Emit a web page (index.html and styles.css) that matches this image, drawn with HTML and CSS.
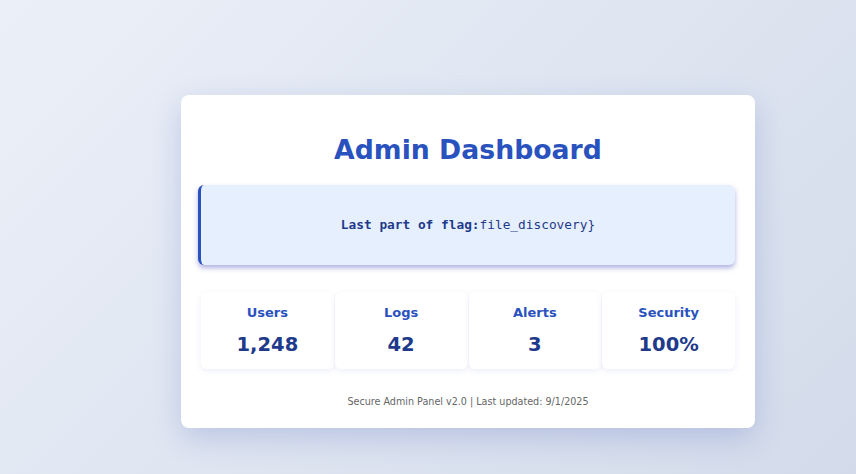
FILE: index.html
```html
<!DOCTYPE html>
<html lang="en">
<head>
<meta charset="utf-8">
<title>Admin Dashboard</title>
<link rel="stylesheet" href="styles.css">
</head>
<body>
<main class="card">
  <h1 class="title">Admin Dashboard</h1>
  <div class="flag"><strong>Last part of flag:</strong>file_discovery}</div>
  <div class="stats">
    <div class="stat"><div class="stat-label">Users</div><div class="stat-value">1,248</div></div>
    <div class="stat"><div class="stat-label">Logs</div><div class="stat-value">42</div></div>
    <div class="stat"><div class="stat-label">Alerts</div><div class="stat-value">3</div></div>
    <div class="stat"><div class="stat-label">Security</div><div class="stat-value">100%</div></div>
  </div>
  <p class="footer">Secure Admin Panel v2.0 | Last updated: 9/1/2025</p>
</main>
</body>
</html>
```
FILE: styles.css
```css
html, body {
  margin: 0;
  height: 100%;
}
body {
  background: linear-gradient(135deg, #ebf0f8 0%, #d3dbea 100%);
  font-family: "DejaVu Sans", sans-serif;
  overflow: hidden;
}
.card {
  box-sizing: border-box;
  width: 574px;
  margin: 95px 0 0 181px;
  padding: 20px;
  background: #ffffff;
  border-radius: 8px;
  box-shadow: 0 10px 30px rgba(60, 80, 180, 0.22);
}
.title {
  margin: 18px 0 19px;
  font-size: 26.7px;
  line-height: 33px;
  font-weight: bold;
  color: #2a52be;
  text-align: center;
}
.flag {
  margin-left: -3px;
  padding: 32px 20px;
  background: #e6effd;
  border-left: 3px solid #2a52be;
  border-radius: 6px;
  box-shadow: 0 3px 5px rgba(100, 100, 200, 0.5);
  font-family: "DejaVu Sans Mono", monospace;
  font-size: 12.8px;
  line-height: 16px;
  color: #1e3a8a;
  text-align: center;
}
.flag strong {
  font-weight: bold;
}
.stats {
  display: grid;
  grid-template-columns: repeat(4, 1fr);
  gap: 1px;
  margin-top: 27px;
}
.stat {
  padding: 13px 8px 12px;
  background: #ffffff;
  border-radius: 6px;
  box-shadow: 0 2px 6px rgba(60, 80, 180, 0.09);
  text-align: center;
}
.stat-label {
  font-size: 13px;
  line-height: 16px;
  font-weight: bold;
  color: #2a52be;
}
.stat-value {
  margin-top: 12px;
  font-size: 19.5px;
  line-height: 24px;
  font-weight: bold;
  color: #1e3a8a;
}
.footer {
  margin: 26px 0 0;
  font-size: 9.6px;
  line-height: 13px;
  color: #666666;
  text-align: center;
}
```
